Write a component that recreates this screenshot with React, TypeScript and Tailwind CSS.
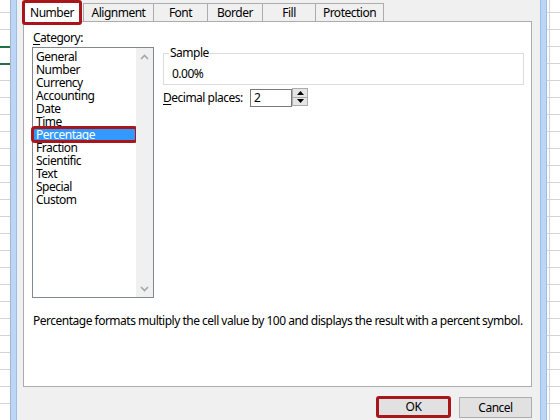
import React from "react";

const categories = [
  "General",
  "Number",
  "Currency",
  "Accounting",
  "Date",
  "Time",
  "Percentage",
  "Fraction",
  "Scientific",
  "Text",
  "Special",
  "Custom",
];

function GridLeft() {
  return (
    <div className="flex w-[10px] shrink-0 flex-col bg-white">
      <div className="h-[12px] shrink-0" />
      {Array.from({ length: 24 }).map((_, i) => (
        <div
          key={i}
          className={
            i === 2 || i === 3
              ? "h-[17px] shrink-0 border-t-2 border-[#217346]"
              : "h-[17px] shrink-0 border-t border-[#d4d4d4]"
          }
        />
      ))}
    </div>
  );
}

function GridRight() {
  return (
    <div className="flex w-[13px] shrink-0 flex-col bg-white">
      <div className="flex h-[12px] shrink-0">
        <div className="w-[2px]" />
        <div className="w-px bg-[#d4d4d4]" />
      </div>
      {Array.from({ length: 24 }).map((_, i) => (
        <div key={i} className="flex h-[17px] shrink-0 border-t border-[#d4d4d4]">
          <div className="w-[2px]" />
          <div className="w-px bg-[#d4d4d4]" />
        </div>
      ))}
    </div>
  );
}

function Chevron({ up }: { up?: boolean }) {
  return (
    <svg width="9" height="6" viewBox="0 0 9 6" className="block">
      <path
        d={up ? "M1 5 L4.5 1.5 L8 5" : "M1 1 L4.5 4.5 L8 1"}
        fill="none"
        stroke="#a6a6a6"
        strokeWidth="1.6"
      />
    </svg>
  );
}

function Tri({ up }: { up?: boolean }) {
  return (
    <svg width="7" height="4" viewBox="0 0 7 4" className="block">
      <path d={up ? "M0 4 L3.5 0 L7 4 Z" : "M0 0 L3.5 4 L7 0 Z"} fill="#000" />
    </svg>
  );
}

export default function App() {
  return (
    <div className="flex h-[420px] w-[560px] overflow-hidden bg-white font-['Noto_Sans',sans-serif] text-[12px] tracking-[-0.5px] text-black">
      <GridLeft />
      <div className="w-[7px] shrink-0 border-l border-r border-l-[#a9b4c4] border-r-[#9dbde5] bg-[#bbd6f6]" />

      {/* dialog */}
      <div className="flex w-[523px] shrink-0 flex-col bg-[#f0f0f0] pl-[5px]">
        {/* tabs */}
        <div className="flex h-[21px] shrink-0 items-start">
          <div className="relative z-10 flex h-[25px] w-[60px] shrink-0 items-center justify-center rounded-[3px] border-[3px] border-[#a8161c] bg-white leading-[16px]">
            Number
          </div>
          <div className="ml-[1px] mt-[3px] flex h-[18px] w-[70px] shrink-0 items-center justify-center border-l border-t border-[#acacac] leading-[16px]">
            Alignment
          </div>
          <div className="mt-[3px] flex h-[18px] w-[54px] shrink-0 items-center justify-center border-l border-t border-[#acacac] leading-[16px]">
            Font
          </div>
          <div className="mt-[3px] flex h-[18px] w-[55px] shrink-0 items-center justify-center border-l border-t border-[#acacac] leading-[16px]">
            Border
          </div>
          <div className="mt-[3px] flex h-[18px] w-[53px] shrink-0 items-center justify-center border-l border-t border-[#acacac] leading-[16px]">
            Fill
          </div>
          <div className="mt-[3px] flex h-[18px] w-[69px] shrink-0 items-center justify-center border-l border-r border-t border-[#acacac] leading-[16px]">
            Protection
          </div>
        </div>

        {/* panel */}
        <div className="ml-[1px] flex h-[366px] w-[509px] shrink-0 flex-col border border-[#acacac] bg-white">
          <div className="flex pl-[8px]">
            {/* category column */}
            <div className="flex w-[122px] shrink-0 flex-col pt-[8px]">
              <div className="h-[16px] pl-[1px] leading-[16px]">
                <span className="underline underline-offset-2">C</span>ategory:
              </div>
              <div className="mt-[1px] flex h-[251px] border border-[#828790]">
                <div className="flex flex-1 flex-col pt-[2px]">
                  {categories.map((c) =>
                    c === "Percentage" ? (
                      <div
                        key={c}
                        className="h-[13px] rounded-[2px] bg-[#3399ff] pl-[3px] leading-[13px] text-white outline-3 outline-offset-[-1px] outline-solid outline-[#a8161c]"
                      >
                        {c}
                      </div>
                    ) : (
                      <div key={c} className="h-[13px] pl-[3px] leading-[13px]">
                        {c}
                      </div>
                    )
                  )}
                </div>
                <div className="flex w-[17px] shrink-0 flex-col justify-between bg-[#f0f0f0]">
                  <div className="flex h-[17px] items-center justify-center">
                    <Chevron up />
                  </div>
                  <div className="flex h-[17px] items-center justify-center">
                    <Chevron />
                  </div>
                </div>
              </div>
            </div>

            {/* right column */}
            <div className="ml-[9px] flex w-[361px] shrink-0 flex-col">
              <fieldset className="mt-[23px] border border-[#dcdcdc]">
                <legend className="ml-[5px] px-[1px] leading-[16px]">Sample</legend>
                <div className="pb-[2px] pl-[8px] pt-[5px] leading-[16px]">0.00%</div>
              </fieldset>
              <div className="mt-[4px] flex items-start">
                <div className="flex h-[18px] w-[87px] shrink-0 items-center leading-[16px]">
                  <span>
                    <span className="underline underline-offset-2">D</span>ecimal places:
                  </span>
                </div>
                <div className="flex h-[18px] w-[42px] shrink-0 items-center border border-[#7a7a7a] bg-white pl-[3px] leading-[16px]">
                  2
                </div>
                <div className="-mt-[1px] flex h-[18px] w-[16px] shrink-0 flex-col border border-[#acacac] bg-[#e5e5e5]">
                  <div className="flex flex-1 items-center justify-center border-b border-[#acacac]">
                    <Tri up />
                  </div>
                  <div className="flex flex-1 items-center justify-center">
                    <Tri />
                  </div>
                </div>
              </div>
            </div>
          </div>

          <div className="mt-[15px] whitespace-nowrap pl-[9px] leading-[16px]">
            Percentage formats multiply the cell value by 100 and displays the result with a percent symbol.
          </div>
        </div>

        {/* buttons */}
        <div className="mt-[9px] flex items-start justify-end gap-[8px] pr-[8px]">
          <div className="flex h-[22px] w-[75px] items-center justify-center rounded-[3px] border-[3px] border-[#a8161c] bg-[#e1e1e1] leading-[16px]">
            OK
          </div>
          <div className="mt-[1px] flex h-[21px] w-[73px] items-center justify-center border border-[#adadad] bg-[#e1e1e1] leading-[16px]">
            Cancel
          </div>
        </div>
      </div>

      <div className="w-[7px] shrink-0 border-l border-r border-l-[#9dbde5] border-r-[#9dbde5] bg-[#bbd6f6]" />
      <GridRight />
    </div>
  );
}
